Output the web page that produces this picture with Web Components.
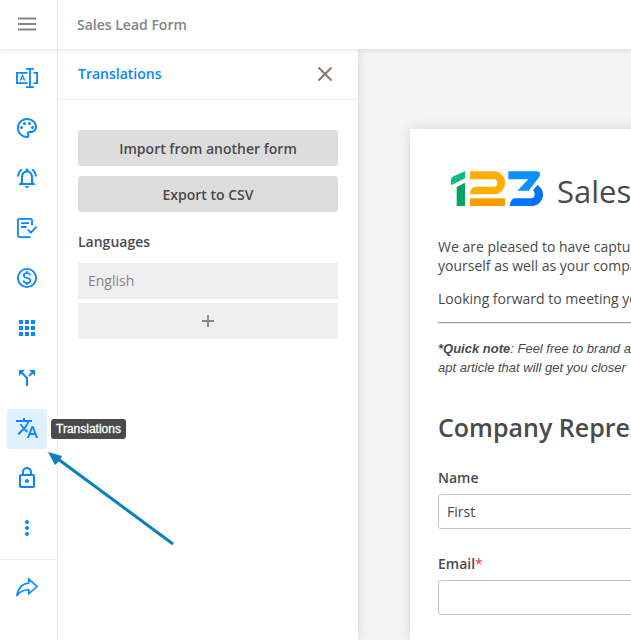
<!DOCTYPE html>
<html lang="en">
<head>
<meta charset="utf-8">
<meta name="viewport" content="width=device-width, initial-scale=1">
<title>Sales Lead Form</title>
<style>
html, body { margin: 0; height: 100%; }
body { font: 14px/20px "Open Sans", "Noto Sans", sans-serif; color: #4a4a4a; overflow: hidden; background: #f4f4f4; }
</style>
</head>
<body>
<builder-app></builder-app>
<script>
const define = (name, html, setup) => {
  const template = document.createElement('template');
  template.innerHTML = '<style>*, ::before, ::after { box-sizing: border-box; }</style>' + html;
  customElements.define(name, class extends HTMLElement {
    constructor() {
      super();
      this.attachShadow({ mode: 'open' }).append(template.content.cloneNode(true));
    }
    connectedCallback() { if (setup) setup(this, this.shadowRoot); }
  });
};

const icons = {
  fields: '<g fill="none" stroke="currentColor" stroke-width="1.8"><path d="M12.500 6.800H1.900v10.400H12.500M18.500 6.800h3.600v10.400H18.500M11 2.900h8M15 2.900v18.200M11 21.100h8"/><path stroke-width="1.100" d="M5.300 14.600 7.600 9.200l2.300 5.400M6 13h3.200"/></g>',
  palette: '<path d="M12 22C6.49 22 2 17.51 2 12S6.49 2 12 2s10 4.04 10 9c0 3.31-2.69 6-6 6h-1.77c-.28 0-.5.22-.5.5 0 .12.05.23.13.33.41.47.64 1.06.64 1.67A2.5 2.5 0 0 1 12 22zm0-18c-4.41 0-8 3.59-8 8s3.59 8 8 8c.28 0 .5-.22.5-.5a.54.54 0 0 0-.14-.35c-.41-.46-.63-1.05-.63-1.65a2.5 2.5 0 0 1 2.5-2.5H16c2.21 0 4-1.79 4-4 0-3.86-3.59-7-8-7z"/><circle cx="6.5" cy="11.5" r="1.5"/><circle cx="9.5" cy="7.5" r="1.5"/><circle cx="14.5" cy="7.5" r="1.5"/><circle cx="17.5" cy="11.5" r="1.5"/>',
  bell: '<path d="M12 22c1.1 0 2-.9 2-2h-4c0 1.1.9 2 2 2zm6-6v-5c0-3.07-1.63-5.64-4.5-6.32V4c0-.83-.67-1.5-1.5-1.5s-1.5.67-1.5 1.5v.68C7.64 5.36 6 7.92 6 11v5l-2 2v1h16v-1l-2-2zm-2 1H8v-6c0-2.48 1.51-4.5 4-4.5s4 2.02 4 4.5v6zM7.58 4.08 6.15 2.65C3.75 4.48 2.17 7.3 2.03 10.5h2a8.445 8.445 0 0 1 3.55-6.42zm12.39 6.42h2c-.15-3.2-1.73-6.02-4.12-7.85l-1.42 1.43a8.495 8.495 0 0 1 3.54 6.42z"/>',
  rules: '<g fill="none" stroke="currentColor" stroke-width="1.8"><path d="M17 9.500V4.400Q17 2.900 15.500 2.900H4.400Q2.900 2.900 2.900 4.400V19.600Q2.900 21.100 4.400 21.100H15.500"/><path d="M6 7.200h8M6 11h5.500M12.800 13.500l3 3.200 5.700-6"/></g>',
  money: '<g fill="none" stroke="currentColor"><circle cx="12" cy="12" r="9.100" stroke-width="1.900"/><path stroke-width="1.700" d="M15.200 9.300C14.900 7.700 13.600 7 12 7c-1.900 0-3.200.9-3.200 2.400 0 3.400 6.600 1.700 6.600 5.100 0 1.600-1.400 2.500-3.400 2.500s-3.300-1-3.500-2.600M12 5v2M12 17v2"/></g>',
  apps: '<path d="M4 4h4v4H4zm6 0h4v4h-4zm6 0h4v4h-4zM4 10h4v4H4zm6 0h4v4h-4zm6 0h4v4h-4zM4 16h4v4H4zm6 0h4v4h-4zm6 0h4v4h-4z"/>',
  split: '<path d="M14 4l2.290 2.290-2.880 2.880 1.420 1.420 2.880-2.880L20 10V4zm-4 0H4v6l2.290-2.290 4.710 4.700V20h2v-8.410l-5.290-5.300z"/>',
  translate: '<path d="M12.870 15.070l-2.540-2.510.03-.03c1.740-1.940 2.980-4.170 3.710-6.530H17V4h-7V2H8v2H1v1.990h11.170C11.500 7.920 10.440 9.750 9 11.350 8.070 10.320 7.300 9.190 6.690 8h-2c.73 1.630 1.730 3.170 2.980 4.560l-5.090 5.020L4 19l5-5 3.110 3.110.76-2.040zM18.500 10h-2L12 22h2l1.120-3h4.750L21 22h2l-4.500-12zm-2.620 7l1.620-4.330L19.120 17h-3.240z"/>',
  lock: '<path d="M18 8h-1V6c0-2.760-2.240-5-5-5S7 3.240 7 6v2H6c-1.100 0-2 .9-2 2v10c0 1.100.9 2 2 2h12c1.100 0 2-.9 2-2V10c0-1.100-.9-2-2-2zM9 6c0-1.660 1.340-3 3-3s3 1.340 3 3v2H9V6zm9 14H6V10h12v10zm-6-3c1.100 0 2-.9 2-2s-.9-2-2-2-2 .9-2 2 .9 2 2 2z"/>',
  more: '<circle cx="12" cy="6" r="2"/><circle cx="12" cy="12" r="2"/><circle cx="12" cy="18" r="2"/>',
  share: '<path fill="none" stroke="currentColor" stroke-width="1.600" d="M13.800 4.200 22 11.500 13.800 18.800V14.800C8 14.800 4.500 16.300 1.800 21.200 2.800 14 7 8.800 13.800 8z"/>',
  menu: '<path d="M3 4.500h18v2H3zm0 5.500h18v2H3zm0 5.500h18v2H3z"/>',
  close: '<path fill="none" stroke="currentColor" stroke-width="2" d="M5.500 5.500l13 13M18.500 5.500l-13 13"/>',
  plus: '<path fill="none" stroke="currentColor" stroke-width="1.800" d="M12 6v12M6 12h12"/>'
};

define('ui-icon', `
<style>
:host { display: inline-flex; width: 24px; height: 24px; flex: none; }
svg { width: 100%; height: 100%; fill: currentColor; }
</style>
<svg viewBox="0 0 24 24" aria-hidden="true"></svg>`,
(el, root) => { root.querySelector('svg').innerHTML = icons[el.getAttribute('name')]; });

define('app-header', `
<style>
:host { display: flex; height: 49px; flex: none; background: #fff; box-shadow: 0 1px 6px rgba(0,0,0,.12); z-index: 2; }
button { width: 58px; border: 0; border-right: 1px solid #ececec; background: none; color: #858585; padding: 0 4px 0 0; display: grid; place-items: center; }
h1 { margin: 0; padding: 0 19px; align-self: center; font-size: 14px; font-weight: 600; color: #858585; }
</style>
<button aria-label="Menu"><ui-icon name="menu"></ui-icon></button>
<h1><slot></slot></h1>`);

define('nav-item', `
<style>
:host { display: block; position: relative; width: 40px; height: 40px; }
button { width: 100%; height: 100%; display: grid; place-items: center; padding: 0 0 2px; border: 0; border-radius: 3px; background: none; color: #0c86fb; }
:host([active]) button { background: #e0f0fe; }
span { position: absolute; left: 44px; top: 10px; z-index: 3; height: 20px; padding: 0 5px; border-radius: 3px; background: #4a4a4a; color: #fff; font: 12px/20px "Liberation Sans", Arial, sans-serif; -webkit-text-stroke: .3px #fff; white-space: nowrap; }
</style>
<button></button>`,
(el, root) => {
  const button = root.querySelector('button');
  const icon = document.createElement('ui-icon');
  icon.setAttribute('name', el.getAttribute('icon'));
  button.append(icon);
  const label = el.getAttribute('label');
  button.setAttribute('aria-label', label);
  if (el.hasAttribute('active')) {
    const tip = document.createElement('span');
    tip.setAttribute('role', 'tooltip');
    tip.textContent = label;
    root.append(tip);
  }
});

define('side-nav', `
<style>
:host { display: block; width: 58px; flex: none; background: #fff; border-right: 1px solid #ececec; }
nav { display: flex; flex-direction: column; gap: 10px; padding: 10px 7px; }
nav + nav { border-top: 1px solid #ececec; padding-top: 8px; }
</style>
<nav aria-label="Form builder">
<nav-item icon="fields" label="Fields"></nav-item>
<nav-item icon="palette" label="Themes"></nav-item>
<nav-item icon="bell" label="Notifications"></nav-item>
<nav-item icon="rules" label="Rules"></nav-item>
<nav-item icon="money" label="Payments"></nav-item>
<nav-item icon="apps" label="Applications"></nav-item>
<nav-item icon="split" label="Branching"></nav-item>
<nav-item icon="translate" label="Translations" active></nav-item>
<nav-item icon="lock" label="Security"></nav-item>
<nav-item icon="more" label="More"></nav-item>
</nav>
<nav aria-label="Publish"><nav-item icon="share" label="Share"></nav-item></nav>`);

define('translations-panel', `
<style>
:host { display: block; width: 300px; flex: none; background: #fff; box-shadow: 0 0 12px rgba(0,0,0,.13); }
header { display: flex; align-items: center; justify-content: space-between; height: 51px; padding: 0 21px 0 20px; border-bottom: 1px solid #ececec; }
h2 { margin: 0; font-size: 14px; font-weight: 600; color: #0c86fb; }
h3 { margin: 20px 0 11px; font-size: 14px; font-weight: 600; line-height: 20px; }
button { font: inherit; color: inherit; border: 0; padding: 0; }
header button { display: flex; background: none; color: #87796c; }
section { padding: 30px 20px; }
.actions { display: grid; gap: 10px; }
.actions button { height: 36px; padding-top: 2px; border-radius: 3px; background: #ddd; font-weight: 600; }
.languages { display: grid; gap: 4px; }
.languages button { height: 36px; padding: 0 10px; text-align: left; background: #efefef; color: #858585; }
.languages .add { display: grid; place-items: center; }
</style>
<header><h2>Translations</h2><button aria-label="Close"><ui-icon name="close"></ui-icon></button></header>
<section>
<div class="actions"><button>Import from another form</button><button>Export to CSV</button></div>
<h3>Languages</h3>
<div class="languages"><button>English</button><button class="add" aria-label="Add language"><ui-icon name="plus"></ui-icon></button></div>
</section>`);

define('brand-logo', `
<style>
:host { display: block; width: 92px; height: 35px; flex: none; }
svg { display: block; width: 100%; height: 100%; }
</style>
<svg viewBox="0 0 276 105" role="img" aria-label="123">
<path fill="#07bd84" d="M0 24Q1 19 9 15L42 1v21L0 43z"/><path fill="#06a365" d="M17 48l25-13v70H17z"/>
<path fill="#ffae00" d="M57 1h71a34.500 34.500 0 0 1 0 69H57C57 55 64 47 78 47h50a11 11 0 0 0 0-22H57z"/><path fill="#ff9d00" d="M57 82h105v23H57z"/>
<path fill="#0b91ff" d="M172 1h86c10 0 12 11 5 19l-30 39h-34l33-34h-60z"/><path fill="#0374f8" d="M259 42c11 6 17 16 17 28 0 20-14 35-33 35h-66c0-15 7-23 17-23h46c12 0 15-16 6-24z"/>
</svg>`);

define('form-field', `
<style>
:host { display: grid; gap: 6px; }
label { font-weight: 600; line-height: 20px; }
label i { color: #f33; font-style: normal; font-weight: 400; }
input { width: 100%; height: 35px; border: 1px solid #c4c4c4; border-radius: 3px; padding: 0 8px; background: #fff; font: inherit; color: inherit; }
input::placeholder { color: #4a4a4a; opacity: 1; }
</style>
<label for="control"></label><input id="control">`,
(el, root) => {
  const label = root.querySelector('label');
  const input = root.querySelector('input');
  label.textContent = el.getAttribute('label');
  if (el.hasAttribute('required')) {
    const mark = document.createElement('i');
    mark.textContent = '*';
    label.append(mark);
    input.required = true;
  }
  input.placeholder = el.getAttribute('placeholder') || '';
});

define('form-preview', `
<style>
:host { display: flex; flex: 1; min-width: 0; overflow: hidden; padding: 80px 52px 0; background: #f4f4f4; }
article { flex: 1 0 640px; padding: 38px 28px; background: #fff; box-shadow: 0 0 12px rgba(0,0,0,.13); white-space: nowrap; }
header { display: flex; align-items: center; gap: 14px; height: 48px; padding-left: 13px; }
brand-logo { margin-bottom: 6px; }
h1 { margin: 0; font-size: 31px; line-height: 44px; font-weight: 400; }
p { margin: 0 0 14px; line-height: 19px; }
.intro { margin-top: 22px; }
hr { margin: 0 0 15px; border: 0; border-top: 1px solid #999; border-bottom: 1px solid #eee; }
.note { font: italic 13px/19px "Liberation Sans", Arial, sans-serif; }
h2 { margin: 32px 0 23px; font-size: 25px; line-height: 36px; font-weight: 600; }
.fields { display: grid; gap: 25px; }
</style>
<article>
<header><brand-logo></brand-logo><h1>Sales Lead Form</h1></header>
<p class="intro">We are pleased to have captured<br>yourself as well as your company</p>
<p>Looking forward to meeting you</p>
<hr>
<p class="note"><b>*Quick note</b>: Feel free to brand and<br>apt article that will get you closer</p>
<h2>Company Representative</h2>
<div class="fields">
<form-field label="Name" placeholder="First"></form-field>
<form-field label="Email" required></form-field>
</div>
</article>`);

define('builder-app', `
<style>
:host { position: relative; display: flex; flex-direction: column; height: 100vh; overflow: hidden; }
main { display: flex; flex: 1; min-height: 0; }
side-nav { position: relative; z-index: 1; }
translations-panel { position: relative; }
.pointer { position: absolute; left: 48px; top: 451px; z-index: 4; width: 127px; height: 95px; pointer-events: none; }
</style>
<app-header>Sales Lead Form</app-header>
<main><side-nav></side-nav><translations-panel></translations-panel><form-preview></form-preview></main>
<svg class="pointer" viewBox="0 0 127 95" aria-hidden="true"><path d="M10 8 125 93" stroke="#0780bd" stroke-width="3"/><path d="M0 1 14 5 12 9 7 14z" fill="#0780bd"/></svg>`);
</script>
</body>
</html>
